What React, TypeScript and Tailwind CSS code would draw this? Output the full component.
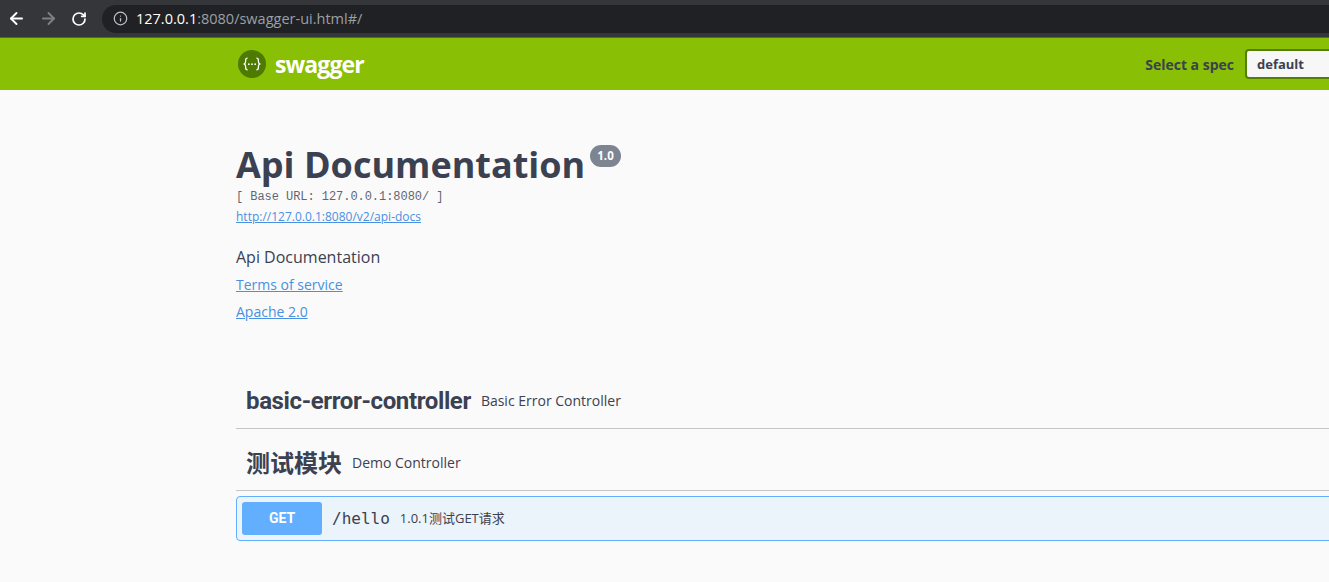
import { ArrowLeft, ArrowRight, Info, RotateCw } from "lucide-react";

const SwaggerLogo = () => (
  <svg width="28" height="28" viewBox="0 0 28 28" className="shrink-0">
    <circle cx="14" cy="14" r="14" fill="#4d7a00" />
    <path
      d="M9.6 8.2c-1.6 0-2 .8-2 2v1.6c0 1.2-.5 1.8-1.4 2.2.9.4 1.4 1 1.4 2.2v1.6c0 1.2.4 2 2 2M18.4 8.2c1.6 0 2 .8 2 2v1.6c0 1.2.5 1.8 1.4 2.2-.9.4-1.4 1-1.4 2.2v1.6c0 1.2-.4 2-2 2"
      fill="none"
      stroke="#fff"
      strokeWidth="1.3"
    />
    <circle cx="10.8" cy="14.2" r="0.9" fill="#fff" />
    <circle cx="14" cy="14.2" r="0.9" fill="#fff" />
    <circle cx="17.2" cy="14.2" r="0.9" fill="#fff" />
  </svg>
);

const BrowserBar = () => (
  <div className="h-[38px] bg-[#35363a] flex items-center border-b border-[#5b5d52] pl-[7px]">
    <div className="flex items-center w-[95px] gap-[13px]">
      <ArrowLeft size={19} strokeWidth={2.4} className="text-white" />
      <ArrowRight size={19} strokeWidth={2.4} className="text-[#7f8083]" />
      <RotateCw size={16} strokeWidth={2.6} className="text-white" />
    </div>
    <div className="flex-1 h-[28px] bg-[#202124] rounded-l-[14px] flex items-center pl-[11px] text-[14.5px] font-['Open_Sans',sans-serif]">
      <Info size={15} className="text-[#bdc1c6] mr-[8px]" />
      <span className="text-white">127.0.0.1</span>
      <span className="text-[#9aa0a6]">:8080/swagger-ui.html#/</span>
    </div>
  </div>
);

const TopBar = () => (
  <div className="h-[52px] bg-[#89bf04] flex items-center pl-[238px]">
    <SwaggerLogo />
    <span className="ml-[9px] text-white text-[23px] font-bold font-['Open_Sans',sans-serif] tracking-[-0.9px]">
      swagger
    </span>
    <div className="ml-auto flex items-center">
      <span className="text-[#3b4151] text-[14px] font-bold font-['Open_Sans',sans-serif] mr-[11px]">
        Select a spec
      </span>
      <div className="w-[120px] h-[30px] bg-[#f7f7f7] border-2 border-[#547f00] rounded-l-[4px] mr-[-36px] pl-[10px] pt-[1px] flex items-center text-[#3b4151] text-[13px] font-bold font-['Open_Sans',sans-serif]">
        default
      </div>
    </div>
  </div>
);

const Info2 = () => (
  <div className="pt-[52px]">
    <div className="flex items-start">
      <h1 className="text-[36px] leading-[45px] font-bold text-[#3b4151] font-['Open_Sans',sans-serif]">
        Api Documentation
      </h1>
      <span className="ml-[5px] mt-[3px] h-[22px] px-[7px] rounded-[57px] bg-[#7d8492] text-white text-[11.5px] font-bold flex items-center font-['Open_Sans',sans-serif]">
        1.0
      </span>
    </div>
    <div className="text-[12px] leading-[14px] mt-[3px] text-[#3b4151] font-['Liberation_Mono',monospace] tracking-[-0.05px] opacity-80">
      [ Base URL: 127.0.0.1:8080/ ]
    </div>
    <a className="block mt-[5px] text-[12px] leading-[16px] text-[#4990e2] underline font-['Open_Sans',sans-serif]">
      http://127.0.0.1:8080/v2/api-docs
    </a>
    <p className="mt-[22px] text-[16px] leading-[21px] text-[#3b4151] font-['Open_Sans',sans-serif]">
      Api Documentation
    </p>
    <a className="block mt-[7px] text-[14px] leading-[19px] text-[#4990e2] underline font-['Open_Sans',sans-serif]">
      Terms of service
    </a>
    <a className="block mt-[8px] text-[14px] leading-[19px] text-[#4990e2] underline font-['Open_Sans',sans-serif]">
      Apache 2.0
    </a>
  </div>
);

const TagHeader = ({ name, desc, cjk }: { name: string; desc: string; cjk?: boolean }) => (
  <div className="h-[62px] flex items-center pl-[10px] pt-[5px] border-b border-[#c4c5c9]">
    <span
      className={`text-[#3b4151] text-[24px] leading-[32px] font-bold ${
        cjk ? "font-['Noto_Sans_CJK_SC',sans-serif]" : "font-['Roboto',sans-serif] tracking-[-0.37px] pt-[2px]"
      }`}
    >
      {name}
    </span>
    <span className="ml-[10px] text-[14px] text-[#3b4151] font-['Open_Sans',sans-serif]">{desc}</span>
  </div>
);

export default function App() {
  return (
    <div className="w-[1329px] h-[582px] overflow-hidden bg-[#fafafa]">
      <BrowserBar />
      <TopBar />
      <div className="pl-[236px] w-[1400px]">
        <Info2 />
        <div className="mt-[46px]">
          <TagHeader name="basic-error-controller" desc="Basic Error Controller" />
          <TagHeader name="测试模块" desc="Demo Controller" cjk />
          <div className="mt-[5px] h-[45px] flex items-center pl-[5px] bg-[#ebf3fb] border border-[#61affe] rounded-l-[4px]">
            <div className="w-[80px] h-[33px] rounded-[3px] bg-[#61affe] text-white text-[14px] font-bold flex items-center justify-center font-['Roboto',sans-serif]">
              GET
            </div>
            <span className="ml-[10px] pt-[1px] text-[16px] text-[#3b4151] font-['DejaVu_Sans_Mono',monospace]">
              /hello
            </span>
            <span className="ml-[10px] pt-[1px] text-[13px] text-[#3b4151] font-['Open_Sans','Noto_Sans_CJK_SC',sans-serif]">
              1.0.1测试GET请求
            </span>
          </div>
        </div>
      </div>
    </div>
  );
}
